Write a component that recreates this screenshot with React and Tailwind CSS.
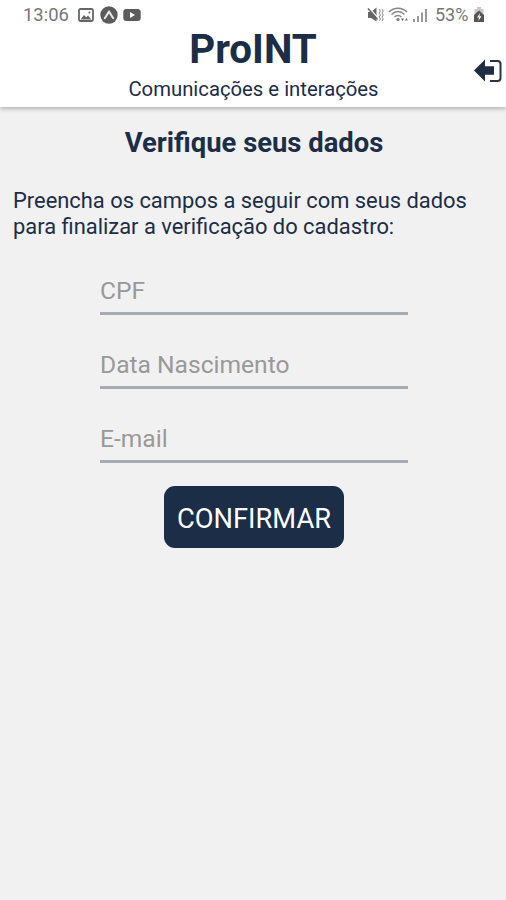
import React from 'react';

function StatusBar() {
  return (
    <div className="flex h-[30px] items-center justify-between pl-[23px] pr-[21px] text-[18px] leading-[30px] text-[#777777]">
      <div className="flex items-center">
        <span className="w-[55px] whitespace-nowrap text-[18.400px]">13:06</span>
        <svg className="h-[14px] w-[16px]" viewBox="0 0 16 14" fill="none">
          <rect x="1" y="1" width="14" height="12" rx="1.5" stroke="#666" strokeWidth="1.8" />
          <path d="M2.5 11.5 6 7l2.2 2.3L10 7.5l3.5 4Z" fill="#666" />
          <circle cx="11.4" cy="4.4" r="1" fill="#666" />
        </svg>
        <svg className="ml-[6px] h-[18px] w-[18px]" viewBox="0 0 18 18" fill="none">
          <circle cx="9" cy="9" r="8.7" fill="#5c5c5c" />
          <path d="M4.800 12.2C6.4 10.4 7.500 7.600 9 5.600c1.500 2 2.600 4.800 4.200 6.600" stroke="#e8e8e8" strokeWidth="2" strokeLinecap="round" />
        </svg>
        <svg className="ml-[5px] h-[12px] w-[18px]" viewBox="0 0 18 12">
          <rect x=".3" width="17.400" height="12" rx="3" fill="#5c5c5c" />
          <path d="M7 3v6l5-3Z" fill="#fff" />
        </svg>
      </div>
      <div className="flex items-center">
        <svg className="h-[18px] w-[17px]" viewBox="0 0 17 18" fill="none">
          <path d="M1 6h3l5.500-4.500v14L4 12H1Z" fill="#666" />
          <path d="m2.500 2.500 9 10" stroke="#fff" strokeWidth="1.200" />
          <path d="m1 2.500 9.500 11" stroke="#666" strokeWidth="1.500" />
          <path d="m12 3 1.500 2-1.500 2 1.500 2-1.500 2 1.500 2-1.500 2M15 3l1.300 2L15 7l1.300 2L15 11l1.300 2L15 15" stroke="#888" />
        </svg>
        <svg className="ml-[4px] h-[18px] w-[21px]" viewBox="0 0 21 18" fill="none" stroke="#888" strokeWidth="1.500">
          <path d="M1 6c5-5 13-5 18 0M3.500 8.500c4-4 9-4 13 0M6.500 11c2-2 5-2 7 0" />
          <circle cx="10" cy="13.500" r="1.700" fill="#888" stroke="none" />
          <path d="m13 12.500 1.500 2.500 1.500-2.500ZM17 14.500l1.300-2.500 1.500 2.500Z" fill="#666" stroke="none" />
        </svg>
        <svg className="ml-[4px] h-[15px] w-[15px]" viewBox="0 0 15 15" fill="#999">
          <path d="M0 11h2v3H0ZM4 8h2v6H4ZM8 4.500h2V14H8ZM12 1h2v13h-2Z" />
        </svg>
        <span className="ml-[7px] w-[34px] whitespace-nowrap text-[18px]">53%</span>
        <svg className="ml-[4px] h-[16px] w-[12px]" viewBox="0 0 12 16">
          <path d="M4 0h4v2h2.500v13h-9V2H4Z" fill="#c8c8c8" />
          <path d="M6 3.500 11 8v7H1V8Z" fill="#555" />
          <path d="M7 6 4 10.500h2L5.300 14 8.500 9.300H6.400Z" fill="#fff" />
        </svg>
      </div>
    </div>
  );
}

function Header() {
  return (
    <header className="h-[107px] bg-white shadow-[0_2px_4px_rgba(0,0,0,0.25)]">
      <StatusBar />
      <div className="grid h-[77px] grid-cols-[32px_1fr_32px]">
        <span />
        <div className="text-center">
          <h1 className="h-[46px] text-[40.3px] font-bold leading-[39px]">ProINT</h1>
          <p className="whitespace-nowrap pl-[1px] text-[20.3px] leading-[27px]">Comunicações e interações</p>
        </div>
        <button className="mt-[28px] h-[26px] w-[28px]" aria-label="Sair">
          <svg className="h-[26px] w-[28px]" viewBox="0 0 28 26" fill="none">
            <path d="M0 12.500 11 1.500v6.800h9v8.400h-9v6.800Z" fill="#1c2d45" />
            <path d="M16 3h7.500q3 0 3 3v14q0 3-3 3H16" stroke="#2b3444" strokeWidth="2" />
          </svg>
        </button>
      </div>
    </header>
  );
}

function Field({ label }) {
  return (
    <div className="flex h-[74px] items-end border-b-[3px] border-[#a7abb5]">
      <input
        className="h-[44px] w-full bg-transparent p-0 text-[24.6px] outline-none placeholder:text-[#999999] placeholder:opacity-100"
        placeholder={label}
        aria-label={label}
      />
    </div>
  );
}

export default function App() {
  return (
    <div className="min-h-[900px] w-full overflow-hidden bg-[#f1f1f1] font-['Roboto',sans-serif] text-[#1c2d48]">
      <Header />
      <main>
        <h2 className="mt-[19px] pl-[2px] text-center text-[27.4px] font-bold leading-[34px]">Verifique seus dados</h2>
        <p className="mt-[28px] whitespace-nowrap pl-[13px] text-[21.9px] leading-[26px]">
          Preencha os campos a seguir com seus dados
          <br />
          para finalizar a verificação do cadastro:
        </p>
        <form className="mx-auto flex w-[308px] translate-x-[1px] flex-col pt-px">
          <Field label="CPF" />
          <Field label="Data Nascimento" />
          <Field label="E-mail" />
          <button
            type="button"
            className="mt-[23px] h-[62px] w-[180px] self-center rounded-[11px] bg-[#1c2d48] pt-[5px] text-[27.3px] text-white"
          >
            CONFIRMAR
          </button>
        </form>
      </main>
    </div>
  );
}
